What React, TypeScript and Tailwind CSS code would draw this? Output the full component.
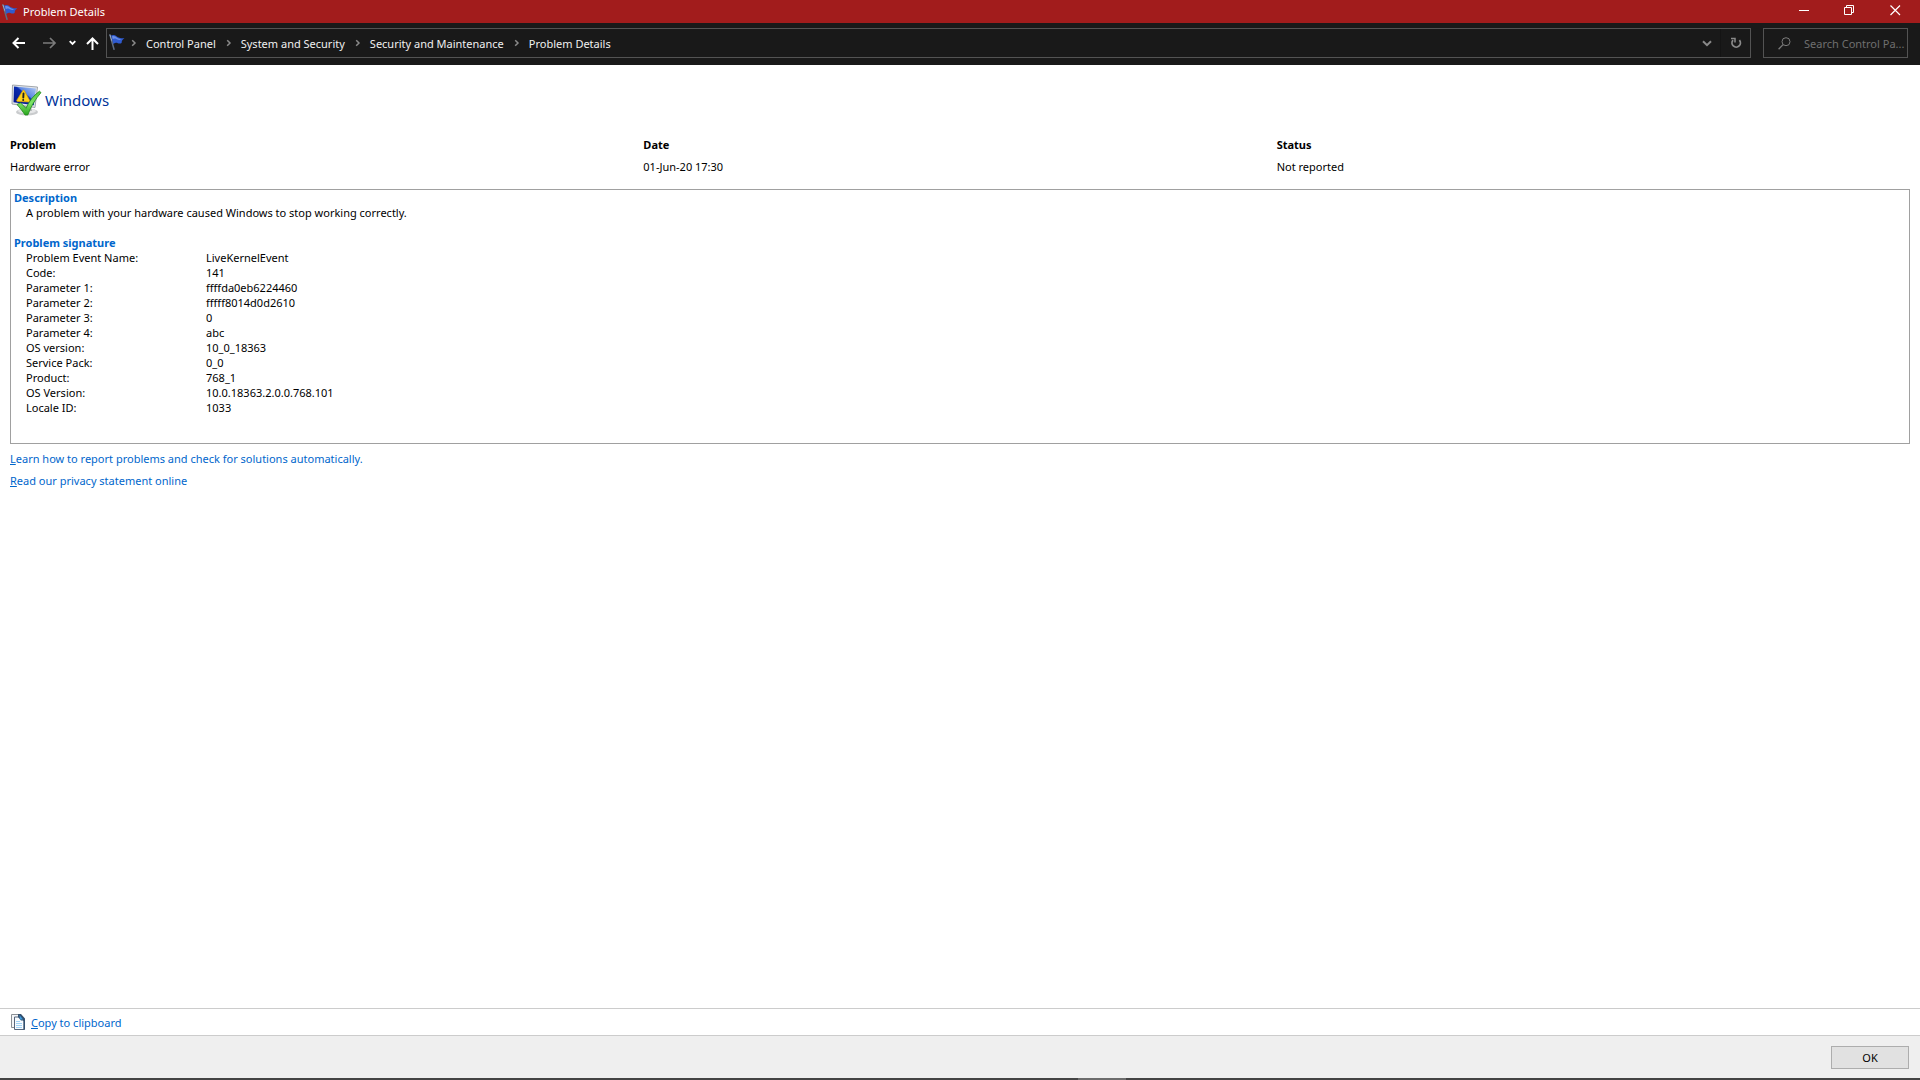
import React from 'react'

const crumbs = ['Control Panel', 'System and Security', 'Security and Maintenance', 'Problem Details']

const signature = [
    { label: 'Problem Event Name:', value: 'LiveKernelEvent' },
    { label: 'Code:', value: '141' },
    { label: 'Parameter 1:', value: 'ffffda0eb6224460' },
    { label: 'Parameter 2:', value: 'fffff8014d0d2610' },
    { label: 'Parameter 3:', value: '0' },
    { label: 'Parameter 4:', value: 'abc' },
    { label: 'OS version:', value: '10_0_18363' },
    { label: 'Service Pack:', value: '0_0' },
    { label: 'Product:', value: '768_1' },
    { label: 'OS Version:', value: '10.0.18363.2.0.0.768.101' },
    { label: 'Locale ID:', value: '1033' },
]

function FlagIcon() {
    return (
        <svg width="16" height="16" viewBox="0 0 16 16" className="shrink-0">
            <path d="M1 1 L5 15.2" stroke="#5d6b80" strokeWidth="1.5" strokeLinecap="round" />
            <path d="M1 1 L3 7" stroke="#a9b8cc" strokeWidth="0.8" strokeLinecap="round" />
            <path d="M2 1.5 C4 0.5 6 1 7.5 2.2 C9.5 3.8 12 4.5 15.5 4.2 C13.5 5.5 12.6 6.5 12.6 9 C10 10.5 8.5 8.5 6.8 8.8 C5.8 9 5 9.6 4.3 10 Z" fill="#2f5bd0" />
            <path d="M3 2.4 C5 1.6 6.5 2.6 8 3.8 C9.5 5 11.5 5.3 13 5.1 C10.5 6.6 8.5 5.6 7 4.8 C5.8 4.2 4.8 4.4 3.8 5 Z" fill="#6c90e8" />
        </svg>
    )
}

function ProblemIcon() {
    return (
        <svg width="32" height="32" viewBox="0 0 32 32" className="shrink-0">
            <defs>
                <linearGradient id="screen" x1="0" y1="1" x2="1" y2="0">
                    <stop offset="0" stopColor="#001089" />
                    <stop offset="0.55" stopColor="#0a2cae" />
                    <stop offset="0.6" stopColor="#5c86e2" />
                    <stop offset="1" stopColor="#b3cdf7" />
                </linearGradient>
                <linearGradient id="check" x1="0" y1="0" x2="0" y2="1">
                    <stop offset="0" stopColor="#4fc83c" />
                    <stop offset="0.5" stopColor="#7fe467" />
                    <stop offset="1" stopColor="#27a51d" />
                </linearGradient>
            </defs>
            <ellipse cx="17" cy="28" rx="11" ry="3.6" fill="#c9cbcd" />
            <ellipse cx="17" cy="27" rx="9" ry="2.6" fill="#e6e7e8" />
            <path d="M13 21 L21 21 L22 27 L12 27 Z" fill="#b5b8bc" />
            <path d="M2.5 1 L27.5 3 L25 23.5 L2 20 Z" fill="#e3e6ea" stroke="#8d939b" strokeWidth="0.8" />
            <path d="M4 2.6 L26 4.4 L23.8 21.3 L3.5 18.2 Z" fill="url(#screen)" />
            <path d="M12.8 6.5 Q13.5 5.6 14.3 6.6 L20 17 Q20.2 18 19 18 L7.4 17.4 Q6.3 17.2 6.8 16.2 Z" fill="#ffd21c" stroke="#d79c00" strokeWidth="0.7" />
            <path d="M13.5 9.5 L13.3 13.5" stroke="#222222" strokeWidth="1.9" strokeLinecap="round" />
            <circle cx="13.2" cy="16" r="1" fill="#222222" />
            <path d="M7 20.5 L10.5 18.8 L16 24.3 C19 17.5 23 12 29.4 7.2 L31 8.6 C25.5 15 20.8 22.5 17.8 31 L15 31 C12.5 27 10 24 7 20.5 Z" fill="url(#check)" stroke="#22871b" strokeWidth="0.8" />
        </svg>
    )
}

function CopyIcon() {
    return (
        <svg width="16" height="18" viewBox="0 0 16 18" className="shrink-0">
            <path d="M1.5 1.5 H9.5 V14.5 H1.5 Z" fill="#f4f6f8" stroke="#8b9096" />
            <path d="M4.5 4 H10.5 L14 8 V16.5 H4.5 Z" fill="#f7fbff" stroke="#56667c" />
            <path d="M8 1 H11 L15 5.5 V16.8 H13.6 V7.5 H11 L8 4 Z" fill="#33506f" />
            <path d="M9.5 2 L13 6.5 H10 Z" fill="#3b9be0" />
            <path d="M6 8.5 H10 M6 10.5 H12 M6 12.5 H12 M6 14.5 H12" stroke="#9fd2f5" />
        </svg>
    )
}

function CrumbChevron() {
    return (
        <svg width="6" height="8" viewBox="0 0 6 8" className="shrink-0">
            <path d="M1.2 1.2 L4 4 L1.2 6.8" fill="none" stroke="#8a8a8a" strokeWidth="1.5" />
        </svg>
    )
}

function TitleBar() {
    return (
        <header className="flex h-[23px] items-center bg-[#a21c1c] pl-0.5 text-white">
            <FlagIcon />
            <h1 className="ml-[5px]">Problem Details</h1>
            <div className="ml-auto flex h-full pr-0.5">
                <button aria-label="Minimize" className="flex w-[46px] items-start justify-center pt-[5px]">
                    <svg width="11" height="11" viewBox="0 0 11 11">
                        <path d="M1 5.5 H11" stroke="white" />
                    </svg>
                </button>
                <button aria-label="Restore" className="flex w-[46px] items-start justify-center pt-[5px]">
                    <svg width="11" height="11" viewBox="0 0 11 11" fill="none" stroke="white">
                        <path d="M0.5 2.5 H7.5 V9.5 H0.5 Z M2.5 2.5 V0.5 H9.5 V7.5 H7.5" />
                    </svg>
                </button>
                <button aria-label="Close" className="flex w-[46px] items-start justify-center pt-[5px]">
                    <svg width="11" height="11" viewBox="0 0 11 11">
                        <path d="M0.5 0.5 L10 10 M10 0.5 L0.5 10" stroke="white" strokeWidth="1.2" />
                    </svg>
                </button>
            </div>
        </header>
    )
}

function NavBar() {
    return (
        <nav className="flex h-[42px] items-start bg-[#191919] pt-[5px] pr-3 pl-3">
            <div className="flex h-[30px] items-center">
                <button aria-label="Back">
                    <svg width="14" height="12" viewBox="0 0 14 12" fill="none" stroke="white" strokeWidth="2">
                        <path d="M13 6 H1.5 M6.5 1 L1.5 6 L6.5 11" />
                    </svg>
                </button>
                <button aria-label="Forward" className="ml-[17px]">
                    <svg width="14" height="12" viewBox="0 0 14 12" fill="none" stroke="#7b7b7b" strokeWidth="1.7">
                        <path d="M0 6 H12 M7 1 L12 6 L7 11" />
                    </svg>
                </button>
                <button aria-label="Recent locations" className="ml-3">
                    <svg width="7" height="6" viewBox="0 0 7 6" fill="none" stroke="white" strokeWidth="1.8">
                        <path d="M0.7 1.2 L3.5 4 L6.3 1.2" />
                    </svg>
                </button>
                <button aria-label="Up" className="ml-[10px] pt-0.5">
                    <svg width="13" height="14" viewBox="0 0 13 14" fill="none" stroke="white" strokeWidth="2">
                        <path d="M6.5 13 V1.8 M1 7 L6.5 1.5 L12 7" />
                    </svg>
                </button>
            </div>
            <div className="ml-[7px] flex h-[30px] flex-1 items-center border border-[#535353] pl-0.5 text-[#f0f0f0]">
                <div className="pb-0.5">
                    <FlagIcon />
                </div>
                <ol className="ml-[6px] flex items-center gap-[10px]">
                    {crumbs.map((crumb) => (
                        <li key={crumb} className="flex items-center gap-[9px]">
                            <CrumbChevron />
                            <a href="#">{crumb}</a>
                        </li>
                    ))}
                </ol>
                <div className="ml-auto flex h-full">
                    <button aria-label="Previous locations" className="flex w-7 items-center justify-center border-r border-[#141414]">
                        <svg width="10" height="7" viewBox="0 0 10 7" fill="none" stroke="#8a8a8a" strokeWidth="2">
                            <path d="M1 1.2 L5 5.2 L9 1.2" />
                        </svg>
                    </button>
                    <button aria-label="Refresh" className="flex w-[29px] items-center justify-center">
                        <svg width="12" height="12" viewBox="0 0 12 12" fill="none" stroke="#8a8a8a" strokeWidth="1.8">
                            <path d="M9.4 3.2 A4.2 4.2 0 1 1 3 3.2" />
                            <path d="M1 1.6 H5 V5.6" strokeWidth="1.5" />
                        </svg>
                    </button>
                </div>
            </div>
            <label className="ml-3 flex h-[30px] w-[145px] items-center border border-[#535353] pl-[14px]">
                <svg width="13" height="13" viewBox="0 0 13 13" fill="none" stroke="#7b7b7b" className="shrink-0">
                    <circle cx="8" cy="4.7" r="4" />
                    <path d="M5 7.6 L0.6 12.2" strokeWidth="1.3" />
                </svg>
                <input
                    aria-label="Search Control Panel"
                    placeholder="Search Control Pa..."
                    className="ml-[13px] w-0 flex-1 bg-transparent outline-none placeholder:text-[#6f6f6f]"
                />
            </label>
        </nav>
    )
}

export default function App() {
    return (
        <div className="flex min-h-screen flex-col bg-white font-['Segoe_UI','Noto_Sans',sans-serif] text-[11px] leading-[15px] text-black">
            <TitleBar />
            <NavBar />

            <main className="flex-1 px-[10px] pt-[19px]">
                <div className="flex items-center gap-[3px]">
                    <ProblemIcon />
                    <h2 className="text-[15px] leading-5 text-[#003399]">Windows</h2>
                </div>

                <table className="mt-[17px] w-full table-fixed text-left">
                    <thead>
                        <tr className="h-[22px]">
                            <th className="font-bold">Problem</th>
                            <th className="font-bold">Date</th>
                            <th className="font-bold">Status</th>
                        </tr>
                    </thead>
                    <tbody>
                        <tr className="h-[22px]">
                            <td>Hardware error</td>
                            <td>01-Jun-20 17:30</td>
                            <td>Not reported</td>
                        </tr>
                    </tbody>
                </table>

                <section className="mt-3 h-[255px] border border-[#a0a0a0] pl-[3px]">
                    <h3 className="font-bold text-[#0066cc]">Description</h3>
                    <p className="pl-3">A problem with your hardware caused Windows to stop working correctly.</p>
                    <h3 className="mt-[15px] font-bold text-[#0066cc]">Problem signature</h3>
                    <dl className="pl-3">
                        {signature.map((item, index) => (
                            <div key={index} className="flex">
                                <dt className="w-[180px]">{item.label}</dt>
                                <dd>{item.value}</dd>
                            </div>
                        ))}
                    </dl>
                </section>

                <div className="mt-[7px] flex flex-col items-start gap-[7px] text-[#0066cc]">
                    <a href="#"><u>L</u>earn how to report problems and check for solutions automatically.</a>
                    <a href="#"><u>R</u>ead our privacy statement online</a>
                </div>
            </main>

            <div className="flex h-[27px] items-center border-t border-[#cccccc] pl-[10px]">
                <CopyIcon />
                <a href="#" className="ml-[5px] text-[#0066cc]"><u>C</u>opy to clipboard</a>
            </div>
            <footer className="flex h-[43px] items-start justify-end border-t border-[#cccccc] bg-[#efefef] pt-[10px] pr-[11px]">
                <button className="h-[23px] w-[78px] border border-[#adadad] bg-[#e1e1e1]">OK</button>
            </footer>
            <div className="flex h-0.5 justify-center bg-[#444444]">
                <div className="ml-[284px] w-12 bg-[#6c6c6c]"></div>
            </div>
        </div>
    )
}
